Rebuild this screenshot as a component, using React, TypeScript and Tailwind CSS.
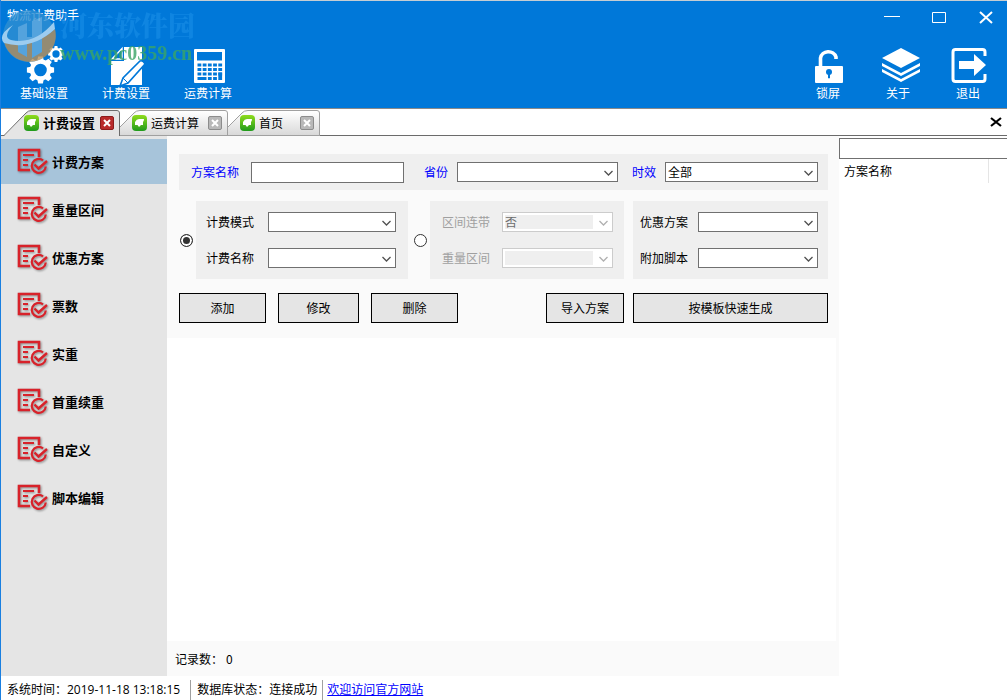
import React, { useState } from 'react';

const gearTeeth = [0, 45, 90, 135, 180, 225, 270, 315];

type GearProps = { cx: number; cy: number; scale: number };

const Gear = ({ cx, cy, scale }: GearProps) => (
    <g transform={`translate(${cx} ${cy}) scale(${scale})`}>
        <circle r="8.5" fill="none" stroke="white" strokeWidth="4.4" />
        {gearTeeth.map((angle) => (
            <path key={angle} d="M-3.2 -9.5 L-2.4 -13.6 H2.4 L3.2 -9.5 Z" fill="white" transform={`rotate(${angle})`} />
        ))}
    </g>
);

const SettingsIcon = () => (
    <svg width="40" height="40" viewBox="0 0 40 40">
        <Gear cx={16.5} cy={24} scale={1} />
        <Gear cx={32} cy={8} scale={0.58} />
    </svg>
);

const DocumentIcon = () => (
    <svg width="40" height="40" viewBox="0 0 40 40">
        <path d="M18 1 H36 V39 H5 V15 H18 Z" fill="white" />
        <path d="M6 13 L16 2.5 V13 Z" fill="none" stroke="white" strokeWidth="1.4" />
        <path d="M34 15 Q37 14 39 18 L22 37 L14 40 L17 32 Z" fill="white" stroke="#0078d9" strokeWidth="1.6" />
        <path d="M17 32 L22 37" stroke="#0078d9" />
    </svg>
);

const keyRows = [17.5, 22, 26.5];
const keyColumns = [9.5, 14.7, 19.9, 25.1, 30.3];

const CalculatorIcon = () => (
    <svg width="40" height="40" viewBox="0 0 40 40">
        <rect x="6" y="3" width="31" height="34" rx="1" fill="white" />
        <rect x="9" y="6" width="25" height="8.5" fill="#0078d9" />
        <g fill="#0078d9">
            {keyRows.map((y) =>
                keyColumns.map((x) => <rect key={`${x}-${y}`} x={x} y={y} width="3.8" height="3" />)
            )}
            <rect x="9.5" y="31" width="9" height="3" />
            <rect x="19.9" y="31" width="3.8" height="3" />
            <rect x="25.1" y="31" width="3.8" height="3" />
            <rect x="30.3" y="26.5" width="3.8" height="7.5" />
        </g>
    </svg>
);

const LockIcon = () => (
    <svg width="40" height="40" viewBox="0 0 40 40">
        <path d="M12.5 20 V12 A8 7.5 0 0 1 28 11 V13" fill="none" stroke="white" strokeWidth="3.6" />
        <rect x="7" y="20" width="28" height="17" rx="1" fill="white" />
        <circle cx="21" cy="26" r="3" fill="#0078d9" />
        <path d="M20.5 26 H21.5 V32 H20.5 Z" fill="#0078d9" stroke="#0078d9" />
    </svg>
);

const LayersIcon = () => (
    <svg width="40" height="40" viewBox="0 0 40 40" overflow="visible">
        <g fill="white" transform="translate(3 0)">
            <path d="M20 2 L39 12 L20 22 L1 12 Z" />
            <path d="M1 17 L20 27 L39 17 V20 L20 30 L1 20 Z" />
            <path d="M1 23 L20 33 L39 23 V26 L20 36 L1 26 Z" />
        </g>
    </svg>
);

const ExitIcon = () => (
    <svg width="40" height="40" viewBox="0 0 40 40">
        <path d="M37 10 V6 Q37 3.5 34.5 3.5 H7.5 Q5 3.5 5 6 V33 Q5 35.5 7.5 35.5 H34.5 Q37 35.5 37 33 V28" fill="none" stroke="white" strokeWidth="3" />
        <path d="M11 15 H26 V8 L38 19 L26 30 V23 H11 Z" fill="white" />
    </svg>
);

const PlanIcon = () => (
    <svg width="32" height="28" viewBox="0 0 32 28" fill="none" className="drop-shadow-[1px_1px_1px_rgba(0,0,0,0.4)]">
        <path d="M22 9 V2 H2 V22 H13" stroke="#d8222a" strokeWidth="2.6" />
        <path d="M6 7 H17 M6 12 H11 M6 17 H11" stroke="#d8222a" strokeWidth="1.8" />
        <path d="M26 12.3 A7 7 0 1 0 28.8 18.5" stroke="#d8222a" strokeWidth="2.2" />
        <path d="M17.5 16.5 L21.5 20.5 L30 13" stroke="#d8222a" strokeWidth="2.4" />
    </svg>
);

const TabIcon = () => (
    <svg width="15" height="16" viewBox="0 0 15 16">
        <defs>
            <linearGradient id="leaf" x1="0" y1="0" x2="0" y2="1">
                <stop offset="0" stopColor="#8fdc1c" />
                <stop offset="1" stopColor="#1f9a1b" />
            </linearGradient>
        </defs>
        <rect width="15" height="16" rx="4" fill="url(#leaf)" />
        <path d="M3 9 L3 7 Q4.500 4 7 4 H12 Q12 6 11 7 V10 H9 L7 12 L5.500 10 H3 Z" fill="white" />
    </svg>
);

const Watermark = () => (
    <div className="pointer-events-none absolute left-0 top-2 flex items-start opacity-80">
        <svg width="58" height="56" viewBox="0 0 58 56" className="shrink-0">
            <circle cx="28" cy="27" r="26" fill="#2f8fd2" />
            <path d="M3 33 Q34 38 54 20 A26 26 0 0 1 3 33 Z" fill="#b8905a" />
            <path d="M17 18 L26 14 V48 L17 43 Z M31 12 L41 8 V43 L31 49 Z M26 28 H31 V33 H26 Z" fill="#6aaede" />
            <path d="M53 13 Q34 36 10 31 Q1 28 12 16 Q-4 26 3 34 Q30 42 54 20 Z" fill="#c4e2f6" />
        </svg>
        <div className="flex flex-col pl-px">
            <span className="font-['Noto_Serif_CJK_SC','Noto_Sans_CJK_SC',serif] text-[27px] leading-8 font-black text-[#1389e4]">河东软件园</span>
            <span className="font-['Liberation_Serif',serif] text-[20px] leading-6 font-bold text-[#3aa566]">www.pc0359.cn</span>
        </div>
    </div>
);

type ToolButtonProps = { label: string; icon: React.ReactNode };

const ToolButton = ({ label, icon }: ToolButtonProps) => (
    <button className="flex min-w-[70px] flex-col items-center text-xs leading-[14px] text-white">
        {icon}
        <span>{label}</span>
    </button>
);

type TabProps = { label: string; shape: string; outline: string; width: string; active?: boolean };

const Tab = ({ label, shape, outline, width, active }: TabProps) => (
    <div className={`relative flex h-[26px] shrink-0 items-center ${width} ${active ? 'pl-5' : 'pl-3'}`}>
        <svg className="absolute inset-0 h-full w-full" fill="none">
            <defs>
                <linearGradient id="tabFill" x1="0" y1="0" x2="0" y2="1">
                    <stop offset="0" stopColor="#ffffff" />
                    <stop offset="1" stopColor="#d9d9d9" />
                </linearGradient>
            </defs>
            <path d={shape} fill={active ? '#e5e5e5' : 'url(#tabFill)'} />
            <path d={outline} stroke={active ? '#6b6b6b' : '#a0a0a0'} />
        </svg>
        <button className="relative flex flex-1 items-center gap-1 whitespace-nowrap">
            <TabIcon />
            <span className={active ? 'text-[13px] font-bold' : 'text-xs'}>{label}</span>
        </button>
        <button
            aria-label={`关闭${label}`}
            className={`relative mr-[6px] flex size-[14px] items-center justify-center rounded-xs border ${active ? 'border-[#8c1c1c] bg-[#b92b2b]' : 'border-[#8c8c8c] bg-[#b8b8b8]'}`}
        >
            <svg width="8" height="8" viewBox="0 0 8 8" stroke="white" strokeWidth="2">
                <path d="M1 1 L7 7 M7 1 L1 7" />
            </svg>
        </button>
    </div>
);

type SelectFieldProps = { id: string; label: string; option?: string; disabled?: boolean; blue?: boolean; className?: string };

const SelectField = ({ id, label, option = '', disabled, blue, className = '' }: SelectFieldProps) => (
    <div className={`flex items-center ${className}`}>
        <label htmlFor={id} className={`shrink-0 ${blue ? 'text-[#0000ff]' : disabled ? 'text-[#a0a0a0]' : 'text-black'}`}>
            {label}
        </label>
        <div className={`relative flex h-5 min-w-0 flex-1 border bg-white ${disabled ? 'border-[#cccccc] text-[#b0b0b0]' : 'border-[#707070] text-[#505050]'}`}>
            <select
                id={id}
                disabled={disabled}
                className={`w-full appearance-none text-xs ${disabled ? 'my-[2px] ml-[2px] mr-[19px] h-[14px] bg-[#efefef] leading-[14px] text-[#6d6d6d] opacity-100' : 'h-[18px] px-[2px] leading-4 text-black'}`}
            >
                <option>{option}</option>
            </select>
            <svg className="pointer-events-none absolute right-1 top-[7px]" width="9" height="7" viewBox="0 0 9 7" fill="none" stroke="currentColor" strokeWidth="1.3">
                <path d="M0.5 1 L4.5 5 L8.5 1" />
            </svg>
        </div>
    </div>
);

type ActionButtonProps = { label: string; width: string };

const ActionButton = ({ label, width }: ActionButtonProps) => (
    <button type="button" className={`h-[30px] border border-black bg-[#e5e5e5] text-center ${width}`}>
        {label}
    </button>
);

const menuItems = ['计费方案', '重量区间', '优惠方案', '票数', '实重', '首重续重', '自定义', '脚本编辑'];

const radioClass =
    'my-auto size-[13px] shrink-0 appearance-none rounded-full border border-[#333333] bg-white checked:bg-[#333333] checked:shadow-[inset_0_0_0_2px_white]';

const App = () => {
    const [current, setCurrent] = useState('计费方案');
    const [mode, setMode] = useState('mode');

    return (
        <div className="flex min-h-screen flex-col border-l border-[#1a7fe0] bg-white font-['Noto_Sans_CJK_SC',sans-serif] text-xs leading-4 text-black">
            {/* Title bar and toolbar */}
            <header className="relative flex flex-col border-t border-b border-t-[#c5cdd3] border-b-[#8a8a8a] bg-[#0078d9]">
                <div className="flex h-[45px] items-start justify-between">
                    <h1 className="pl-[6px] pt-[6px] text-white">物流计费助手</h1>
                    <div className="flex pr-2 pt-2">
                        <button aria-label="最小化" className="flex h-4 w-[47px] items-center justify-center">
                            <svg width="16" height="16" stroke="white"><path d="M0 7.5 H16" /></svg>
                        </button>
                        <button aria-label="最大化" className="flex h-4 w-[47px] items-center justify-center">
                            <svg width="16" height="16" stroke="white" fill="none"><path d="M1.5 3.5 H14.5 V13.5 H1.5 Z" /></svg>
                        </button>
                        <button aria-label="关闭" className="flex h-4 w-[37px] items-center justify-end pr-[6px]">
                            <svg width="14" height="14" stroke="white" strokeWidth="2"><path d="M1 2 L13 13 M13 2 L1 13" /></svg>
                        </button>
                    </div>
                </div>
                <div className="flex justify-between pb-2">
                    <nav className="flex gap-3 pl-2">
                        <ToolButton label="基础设置" icon={<SettingsIcon />} />
                        <ToolButton label="计费设置" icon={<DocumentIcon />} />
                        <ToolButton label="运费计算" icon={<CalculatorIcon />} />
                    </nav>
                    <nav className="flex pr-1">
                        <ToolButton label="锁屏" icon={<LockIcon />} />
                        <ToolButton label="关于" icon={<LayersIcon />} />
                        <ToolButton label="退出" icon={<ExitIcon />} />
                    </nav>
                </div>
                <Watermark />
            </header>

            {/* Open tabs */}
            <div className="flex h-[27px] items-end border-b border-[#6b6b6b] pl-[3px]">
                <div className="-mb-px flex flex-1">
                    <Tab label="计费设置" active width="w-[116px]" shape="M0 26 L22 3 Q24 1 28 1 H113 Q115 1 115 3 V26 Z" outline="M0 25.5 L22 3 Q24 0.5 28 0.5 H113 Q115.5 0.5 115.5 3 V26" />
                    <Tab label="运费计算" width="w-[108px]" shape="M0 25 V17 L14 3 Q16 1 20 1 H107 V25 Z" outline="M0 17 L14 3 Q16 0.5 20 0.5 H105 Q107.5 0.5 107.5 3 V25 M0 25.5 H108" />
                    <Tab label="首页" width="w-[92px]" shape="M0 25 V17 L14 3 Q16 1 20 1 H91 V25 Z" outline="M0 17 L14 3 Q16 0.5 20 0.5 H89 Q91.5 0.5 91.5 3 V25 M0 25.5 H92" />
                </div>
                <button aria-label="关闭标签" className="mb-[7px] mr-[5px]">
                    <svg width="12" height="12" stroke="black" strokeWidth="2.2"><path d="M1 2 L11 10 M11 2 L1 10" /></svg>
                </button>
            </div>

            <div className="flex flex-1">
                {/* Sidebar */}
                <aside className="flex w-[166px] shrink-0 flex-col gap-[3px] bg-[#e5e5e5] pt-[3px]">
                    {menuItems.map((item) => (
                        <button
                            key={item}
                            onClick={() => setCurrent(item)}
                            className={`flex h-[45px] items-center gap-[3px] pl-4 text-[13px] font-bold ${item === current ? 'bg-[#a7c4da]' : ''}`}
                        >
                            <PlanIcon />
                            <span>{item}</span>
                        </button>
                    ))}
                </aside>

                <main className="flex min-w-0 flex-1 flex-col bg-[#fafafa]">
                    <form className="flex flex-col pb-[15px] pl-3 pr-[11px] pt-[18px]">
                        <div className="flex h-9 items-center bg-[#efefef] pl-3 pr-[10px]">
                            <div className="mr-5 flex min-w-0 flex-[213] items-center gap-3">
                                <label htmlFor="planName" className="shrink-0 text-[#0000ff]">方案名称</label>
                                <input id="planName" type="text" className="h-[21px] min-w-0 flex-1 border border-[#707070] bg-white px-1" />
                            </div>
                            <SelectField id="province" label="省份" blue className="mr-[14px] flex-[194] gap-[9px]" />
                            <SelectField id="timing" label="时效" option="全部" blue className="flex-[186] gap-[9px]" />
                        </div>

                        <div className="mt-[11px] flex pl-px">
                            <input type="radio" name="mode" aria-label="计费模式" checked={mode === 'mode'} onChange={() => setMode('mode')} className={radioClass} />
                            <div className="ml-[3px] mr-[6px] flex flex-[190] flex-col gap-4 bg-[#efefef] py-[11px] pl-[10px] pr-3">
                                <SelectField id="feeMode" label="计费模式" className="gap-[14px]" />
                                <SelectField id="feeName" label="计费名称" className="gap-[14px]" />
                            </div>
                            <input type="radio" name="mode" aria-label="区间连带" checked={mode === 'range'} onChange={() => setMode('range')} className={radioClass} />
                            <div className="ml-[3px] mr-[9px] flex flex-[171] flex-col gap-4 bg-[#efefef] py-[11px] pl-3 pr-[11px]">
                                <SelectField id="rangeLink" label="区间连带" option="否" disabled={mode !== 'range'} className="gap-3" />
                                <SelectField id="weightRange" label="重量区间" disabled={mode !== 'range'} className="gap-3" />
                            </div>
                            <div className="flex flex-[178] flex-col gap-4 bg-[#efefef] py-[11px] pl-[7px] pr-[10px]">
                                <SelectField id="discount" label="优惠方案" className="gap-[10px]" />
                                <SelectField id="script" label="附加脚本" className="gap-[10px]" />
                            </div>
                        </div>

                        <div className="mt-[14px] flex justify-between">
                            <div className="flex gap-3">
                                <ActionButton label="添加" width="w-[87px]" />
                                <ActionButton label="修改" width="w-[81px]" />
                                <ActionButton label="删除" width="w-[87px]" />
                            </div>
                            <div className="flex gap-[9px]">
                                <ActionButton label="导入方案" width="w-[78px]" />
                                <ActionButton label="按模板快速生成" width="w-[195px]" />
                            </div>
                        </div>
                    </form>

                    {/* Record list */}
                    <div className="mr-[3px] flex-1 bg-white" />
                    <div className="flex h-[35px] items-center pl-2">
                        <span>记录数：</span>
                        <span className="pl-[3px]">0</span>
                    </div>
                </main>

                {/* Plan list */}
                <aside className="flex w-[168px] shrink-0 flex-col bg-white pt-[2px]">
                    <input type="text" aria-label="查找方案" className="h-[21px] w-full border border-r-0 border-[#707070] bg-white px-1" />
                    <table className="w-full">
                        <thead>
                            <tr className="h-6">
                                <th className="w-[149px] border-r border-[#e5e5e5] pl-[5px] text-left font-normal">方案名称</th>
                                <td />
                            </tr>
                        </thead>
                    </table>
                </aside>
            </div>

            {/* Status bar */}
            <footer className="flex h-6 items-center bg-white pl-[6px] pt-[3px] font-['Open_Sans','Noto_Sans_CJK_SC',sans-serif]">
                <span className="pr-[10px]">系统时间：2019-11-18 13:18:15</span>
                <span className="h-5 border-l border-[#a0a0a0] pl-[6px] pr-[5px] leading-5">数据库状态：连接成功</span>
                <span className="h-5 border-l border-[#a0a0a0] pl-1 leading-5">
                    <a href="#" className="text-[#0000ff] underline">欢迎访问官方网站</a>
                </span>
            </footer>
        </div>
    );
};

export default App;
